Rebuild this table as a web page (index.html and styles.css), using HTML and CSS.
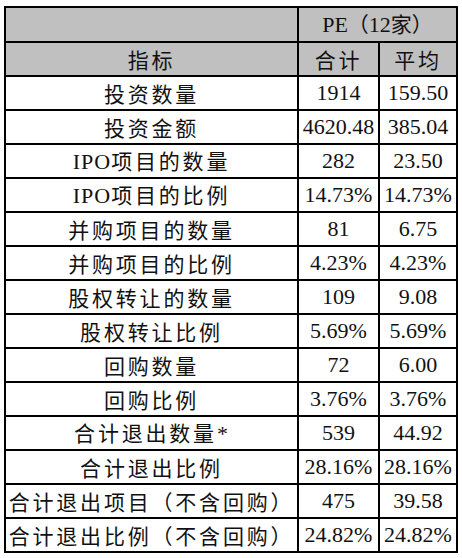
FILE: index.html
```html
<!DOCTYPE html>
<html lang="zh-CN">
<head>
<meta charset="utf-8">
<title>PE 退出统计</title>
<link rel="stylesheet" href="styles.css">
</head>
<body>
<div class="page">
<table class="stats">
  <colgroup>
    <col class="c-label">
    <col class="c-num">
    <col class="c-avg">
  </colgroup>
  <thead>
    <tr class="hd1"><th class="blank"></th><th colspan="2" class="group">PE<span class="cjk">（</span>12<span class="cjk">家）</span></th></tr>
    <tr class="hd2"><th class="label">指标</th><th class="label">合计</th><th class="label">平均</th></tr>
  </thead>
  <tbody>
    <tr><td class="label">投资数量</td><td>1914</td><td>159.50</td></tr>
    <tr><td class="label">投资金额</td><td>4620.48</td><td>385.04</td></tr>
    <tr><td class="label"><span class="lat">IPO</span>项目的数量</td><td>282</td><td>23.50</td></tr>
    <tr><td class="label"><span class="lat">IPO</span>项目的比例</td><td>14.73%</td><td>14.73%</td></tr>
    <tr><td class="label">并购项目的数量</td><td>81</td><td>6.75</td></tr>
    <tr><td class="label">并购项目的比例</td><td>4.23%</td><td>4.23%</td></tr>
    <tr><td class="label">股权转让的数量</td><td>109</td><td>9.08</td></tr>
    <tr><td class="label">股权转让比例</td><td>5.69%</td><td>5.69%</td></tr>
    <tr><td class="label">回购数量</td><td>72</td><td>6.00</td></tr>
    <tr><td class="label">回购比例</td><td>3.76%</td><td>3.76%</td></tr>
    <tr><td class="label">合计退出数量<span class="lat">*</span></td><td>539</td><td>44.92</td></tr>
    <tr><td class="label">合计退出比例</td><td>28.16%</td><td>28.16%</td></tr>
    <tr><td class="label">合计退出项目（不含回购）</td><td>475</td><td>39.58</td></tr>
    <tr><td class="label">合计退出比例（不含回购）</td><td>24.82%</td><td>24.82%</td></tr>
  </tbody>
</table>
</div>
</body>
</html>
```
FILE: styles.css
```css
html, body {
  margin: 0;
  padding: 0;
  background: #ffffff;
}
.page {
  padding: 6px 0 0 4px;
}
.stats {
  border-collapse: collapse;
  width: 452px;
  table-layout: fixed;
  color: #111111;
  font-family: "Liberation Serif", "Noto Sans CJK SC", serif;
  font-size: 22px;
}
.c-label { width: 293px; }
.c-num { width: 81px; }
.c-avg { width: 78px; }
.stats th,
.stats td {
  border: 2px solid #000;
  padding: 0;
  text-align: center;
  vertical-align: middle;
  font-weight: normal;
  white-space: nowrap;
  line-height: 1;
}
.stats tr { height: 34px; }
.stats thead th { background: #c0c0c0; }
.stats .hd1 { height: 35px; }
.label {
  font-family: "Noto Sans CJK SC", sans-serif;
  font-size: 21px;
  letter-spacing: 2.8px;
}
.label .lat {
  font-family: "Liberation Serif", serif;
  font-size: 22px;
  letter-spacing: 1px;
}
.group { letter-spacing: 0; }
.cjk {
  font-family: "Noto Sans CJK SC", sans-serif;
  font-size: 21px;
}
```
